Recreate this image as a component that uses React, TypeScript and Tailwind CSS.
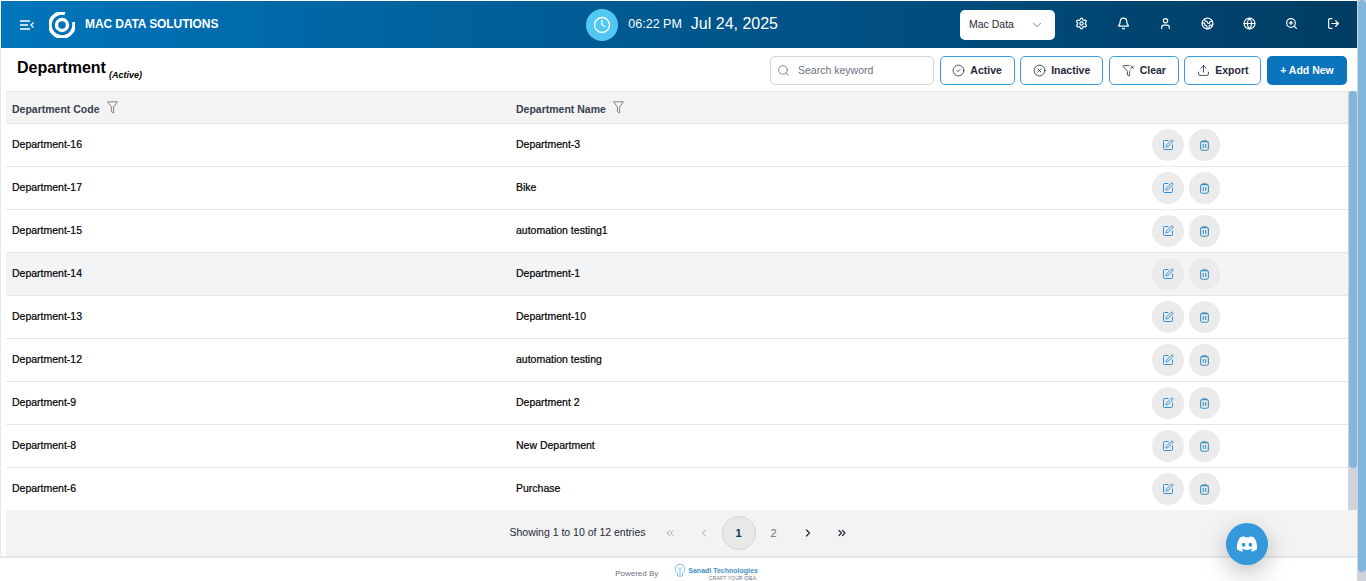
import { Bell, ChevronDown, ChevronLeft, ChevronRight, ChevronsLeft, ChevronsRight, CircleCheck, CircleX, Clock, Earth, FunnelX, Globe, LogOut, Search, Settings, SquarePen, Upload, User, ZoomIn } from 'lucide-react';
import { FaDiscord } from 'react-icons/fa';

const rows = [
  { code: 'Department-16', name: 'Department-3' },
  { code: 'Department-17', name: 'Bike' },
  { code: 'Department-15', name: 'automation testing1' },
  { code: 'Department-14', name: 'Department-1' },
  { code: 'Department-13', name: 'Department-10' },
  { code: 'Department-12', name: 'automation testing' },
  { code: 'Department-9', name: 'Department 2' },
  { code: 'Department-8', name: 'New Department' },
  { code: 'Department-6', name: 'Purchase' },
];

const headerIcons = [Settings, Bell, User, Earth, Globe, ZoomIn, LogOut];

function OutlineButton({ icon: Icon, label, className }: { icon: typeof Bell, label: string, className: string }) {
  return (
    <button className={`h-[29px] flex items-center justify-center gap-[5px] rounded-[5px] border border-[#3d9be0] bg-white text-[10.5px] font-bold text-[#1f2937] ${className}`}>
      <Icon size={13} strokeWidth={1.5} />
      {label}
    </button>
  );
}

function FilterIcon() {
  return (
    <svg width="11" height="13" viewBox="0 0 11 13" fill="none" stroke="#777" strokeWidth="0.9" className="-mt-[5px]">
      <path d="M0.6 0.8h9.8L6.6 6v6L4.4 10.6V6z" />
    </svg>
  );
}

function TrashIcon() {
  return (
    <svg width="11" height="12" viewBox="0 0 11 12" fill="none">
      <path d="M3 1.5 Q5.5 0 8 1.5 L9 3 H2 z" fill="#7fa8c4" />
      <rect x="1.6" y="2.6" width="7.8" height="8.6" rx="1.6" stroke="#3a93c4" strokeWidth="1.1" />
      <path d="M4.3 5v4M6.7 5v4" stroke="#3a93c4" strokeWidth="1.1" />
    </svg>
  );
}

export default function App() {
  return (
    <div className="w-full h-[581px] flex overflow-hidden bg-white font-['Liberation_Sans',Arial,sans-serif]">
      <div className="flex-1 min-w-0 flex flex-col relative">
        <header className="h-[47px] mt-px ml-px shrink-0 flex items-center bg-gradient-to-r from-[#0075bb] to-[#003c63] text-white">
          <svg width="15" height="12" viewBox="0 0 15 12" fill="none" stroke="#fff" strokeWidth="1.3" className="ml-[19px]">
            <path d="M0 2h10M0 6h8M0 10h10M13.5 3.5 11 6l2.5 2.5" />
          </svg>
          <svg width="26" height="26" viewBox="0 0 26 26" className="ml-[14px]">
            <path d="M16 1.4 A12 12 0 1 0 24.6 10" fill="none" stroke="#fff" strokeWidth="3.6" />
            <circle cx="13" cy="13" r="5.5" fill="none" stroke="#fff" strokeWidth="3.4" />
          </svg>
          <span className="ml-[10px] -mt-[2px] text-[12px] font-bold tracking-[-0.1px] whitespace-nowrap">MAC DATA SOLUTIONS</span>
          <div className="ml-[368px] w-[32px] h-[32px] rounded-full bg-[#52c7f1] flex items-center justify-center">
            <Clock size={18} strokeWidth={1.7} />
          </div>
          <span className="ml-[10px] text-[12.5px] whitespace-nowrap">06:22 PM</span>
          <span className="ml-[9px] -mt-[1px] text-[16px] whitespace-nowrap">Jul 24, 2025</span>
          <div className="ml-auto w-[95px] h-[30px] rounded-[5px] bg-white text-[#1f2937] flex items-center justify-between pl-[9px] pr-[11px] text-[10.5px]">
            Mac Data
            <ChevronDown size={14} strokeWidth={1.5} className="text-[#6b7280]" />
          </div>
          <div className="flex items-center gap-[29px] ml-[20px] mr-[17px] -mt-[2px]">
            {headerIcons.map((Icon, i) => (
              <Icon key={i} size={13} strokeWidth={2.2} />
            ))}
          </div>
        </header>

        <div className="flex-1 min-h-0 flex flex-col pl-[5px] border-l border-[#e5e7eb]">
          <div className="h-[43px] shrink-0 flex items-center pr-[10px] pt-[2px]">
            <h1 className="ml-[11px] text-[16px] font-bold text-black leading-none -mt-[6px]">Department</h1>
            <span className="ml-[3px] mt-[10px] text-[9px] font-bold italic text-black">(Active)</span>
            <div className="ml-auto flex items-center gap-[5.6px]">
              <div className="w-[164px] h-[29px] rounded-[5px] border border-[#d4d4d8] flex items-center pl-[6px] gap-[8px] text-[10.5px] text-[#6b7280]">
                <Search size={13} strokeWidth={1.5} />
                Search keyword
              </div>
              <OutlineButton icon={CircleCheck} label="Active" className="w-[75px]" />
              <OutlineButton icon={CircleX} label="Inactive" className="w-[83px]" />
              <OutlineButton icon={FunnelX} label="Clear" className="w-[70px]" />
              <OutlineButton icon={Upload} label="Export" className="w-[77px]" />
              <button className="w-[80px] h-[29px] rounded-[5px] bg-[#0a75bc] text-white text-[10.5px] font-bold">+ Add New</button>
            </div>
          </div>

          <div className="flex-1 min-h-0 flex">
            <div className="flex-1 min-w-0 flex flex-col">
              <div className="h-[33px] shrink-0 flex items-center bg-[#f3f3f3] border-y border-[#e5e5e5] pt-[4px] text-[10.5px] font-bold text-[#374151]">
                <div className="w-[510px] pl-[6px] flex items-center gap-[7px]">
                  Department Code <FilterIcon />
                </div>
                <div className="flex items-center gap-[7px]">
                  Department Name <FilterIcon />
                </div>
              </div>
              <div className="flex-1 min-h-0 overflow-hidden">
                {rows.map((row, i) => (
                  <div key={row.code} className={`h-[43px] flex items-center border-b border-[#e5e5e5] text-[10.5px] text-black [-webkit-text-stroke:0.2px] ${i === 3 ? 'bg-[#f3f4f5]' : ''}`}>
                    <div className="w-[510px] pl-[6px] -mt-[1px]">{row.code}</div>
                    <div className="w-[636px] -mt-[1px]">{row.name}</div>
                    <div className="flex gap-[5px]">
                      <span className="w-[32px] h-[32px] rounded-full bg-[#ebebeb] flex items-center justify-center text-[#2f8fd8]">
                        <SquarePen size={12} strokeWidth={2} />
                      </span>
                      <span className="w-[31px] h-[32px] rounded-full bg-[#ebebeb] flex items-center justify-center">
                        <TrashIcon />
                      </span>
                    </div>
                  </div>
                ))}
              </div>
            </div>
            <div className="w-[9px] shrink-0 bg-[#d0d3dc] flex justify-center">
              <div className="w-[8px] h-[377px] rounded-[4px] bg-[#82b6dd]"></div>
            </div>
          </div>

          <div className="h-[46px] shrink-0 flex items-center justify-center bg-[#f3f3f3] text-[10.5px] text-[#1f2937] pl-[5px]">
            <span className="mr-[7px]">Showing 1 to 10 of 12 entries</span>
            <span className="w-[34px] flex justify-center text-[#9ca3af]"><ChevronsLeft size={12} /></span>
            <span className="w-[34px] flex justify-center text-[#9ca3af]"><ChevronLeft size={12} /></span>
            <span className="ml-[1px] w-[34px] h-[34px] rounded-full bg-[#e8e8e8] border border-[#d4d4d4] flex items-center justify-center text-[11px] font-bold text-[#003c63]">1</span>
            <span className="ml-[1px] w-[34px] text-center text-[11px] text-[#6b7280]">2</span>
            <span className="w-[34px] flex justify-center"><ChevronRight size={12} strokeWidth={2.4} /></span>
            <span className="w-[34px] flex justify-center"><ChevronsRight size={12} strokeWidth={2.4} /></span>
          </div>
        </div>

        <footer className="h-[25px] shrink-0 border-t-2 border-[#e5e7eb] flex items-start justify-center bg-white pl-[16px]">
          <span className="mt-[10px] text-[8px] text-[#6b7280]">Powered By</span>
          <div className="ml-[16px] flex items-start gap-[2px]">
            <svg width="12" height="14" viewBox="0 0 12 14" fill="none" stroke="#6bb4dc" strokeWidth="0.8" className="mt-[5px]">
              <path d="M6 1a5 5 0 0 0-2.5 9.3V13h5v-2.7A5 5 0 0 0 6 1z" />
              <path d="M4.2 4.5 6 7l1.8-2.5M6 7v5" />
            </svg>
            <div className="flex flex-col items-end leading-none">
              <span className="mt-[9px] text-[7px] font-bold text-[#3f8fc4]">Sanadi Technologies</span>
              <span className="mt-[2px] text-[5px] text-[#6b7280] tracking-wide">CRAFT YOUR IDEA.</span>
            </div>
          </div>
        </footer>

        <button className="absolute left-[1226px] top-[523px] w-[42px] h-[42px] rounded-full bg-[#3498db] shadow-[0_8px_24px_rgba(0,0,0,0.25)] flex items-center justify-center text-white">
          <FaDiscord size={22} />
        </button>
      </div>
      <div className="w-[9px] shrink-0 bg-[#d0d3dc] pl-px">
        <div className="w-[8px] h-[572px] rounded-[4px] bg-[#82b6dd]"></div>
      </div>
    </div>
  );
}
